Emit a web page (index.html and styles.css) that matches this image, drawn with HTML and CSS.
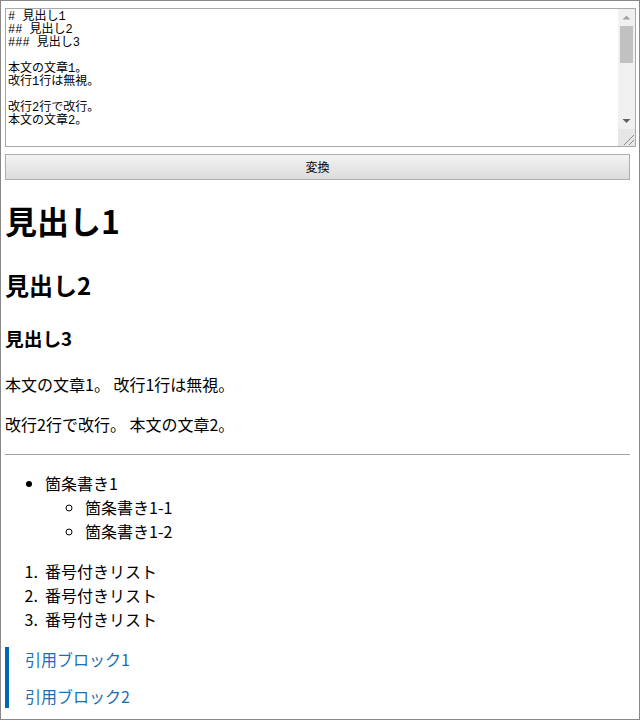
FILE: index.html
```html
<!DOCTYPE html>
<html lang="ja">
<head>
<meta charset="utf-8">
<title>Markdown</title>
<link rel="stylesheet" href="styles.css">
</head>
<body>
<div class="editor">
<textarea class="source"># 見出し1
## 見出し2
### 見出し3

本文の文章1。
改行1行は無視。

改行2行で改行。
本文の文章2。

---

- 箇条書き1
    - 箇条書き1-1
    - 箇条書き1-2

1. 番号付きリスト
2. 番号付きリスト
3. 番号付きリスト

> 引用ブロック1
>
> 引用ブロック2
</textarea>
<div class="vscroll">
<div class="sb-btn sb-up"><svg width="17" height="17" viewBox="0 0 17 17"><path d="M4.5 10.5 L8.5 6.5 L12.5 10.5 Z" fill="#a3a3a3"/></svg></div>
<div class="sb-thumb"></div>
<div class="sb-track"></div>
<div class="sb-btn sb-down"><svg width="17" height="17" viewBox="0 0 17 17"><path d="M4.5 7 L12.5 7 L8.5 11 Z" fill="#606060"/></svg></div>
<div class="sb-grip"><svg width="17" height="17" viewBox="0 0 17 17"><path d="M16 6 L6 16 M16 11 L11 16" stroke="#8a8a8a" stroke-width="1" fill="none"/></svg></div>
</div>
</div>
<button class="convert">変換</button>
<div class="output">
<h1>見出し1</h1>
<h2>見出し2</h2>
<h3>見出し3</h3>
<p>本文の文章1。 改行1行は無視。</p>
<p>改行2行で改行。 本文の文章2。</p>
<hr>
<ul>
<li>箇条書き1
<ul>
<li>箇条書き1-1</li>
<li>箇条書き1-2</li>
</ul>
</li>
</ul>
<ol>
<li>番号付きリスト</li>
<li>番号付きリスト</li>
<li>番号付きリスト</li>
</ol>
<blockquote>
<p>引用ブロック1</p>
<p>引用ブロック2</p>
</blockquote>
</div>
</body>
</html>
```
FILE: styles.css
```css
html {
  height: 100%;
}
body {
  margin: 0;
  height: 720px;
  box-sizing: border-box;
  border: 1px solid #888888;
  padding: 7px 9px 0 4px;
  overflow: hidden;
  background: #ffffff;
  color: #000000;
  font-family: "Noto Sans CJK JP", sans-serif;
  font-size: 16px;
  line-height: 24px;
}
.editor {
  display: flex;
  box-sizing: border-box;
  width: calc(100% + 6px);
  height: 139px;
  margin: 0 0 7px 0;
  border: 1px solid #a9a9a9;
  background: #ffffff;
}
.source {
  flex: 1;
  min-width: 0;
  box-sizing: border-box;
  height: 100%;
  margin: 0;
  padding: 2px;
  border: 0;
  font-family: "Liberation Mono", "Noto Sans CJK JP", monospace;
  font-size: 12px;
  line-height: 13px;
  color: #000000;
  background: #ffffff;
  overflow: hidden;
  resize: none;
  outline: none;
}
.vscroll {
  width: 17px;
  flex: none;
  display: flex;
  flex-direction: column;
  background: #f0f0f0;
}
.sb-btn {
  height: 17px;
  flex: none;
}
.sb-btn svg,
.sb-grip svg {
  display: block;
}
.sb-thumb {
  height: 37px;
  flex: none;
  margin: 0 2px;
  background: #c1c1c1;
}
.sb-track {
  flex: 1;
}
.sb-grip {
  height: 17px;
  flex: none;
  background: #e6e6e6;
}
.convert {
  display: block;
  box-sizing: border-box;
  width: 100%;
  height: 26px;
  margin: 0;
  padding: 0;
  border: 1px solid #adadad;
  border-radius: 0;
  background: linear-gradient(#f3f3f3, #dcdcdc);
  font-family: "Noto Sans CJK JP", sans-serif;
  font-size: 12px;
  line-height: 24px;
  color: #000000;
}
.output h1 {
  font-size: 32px;
  line-height: 48px;
  margin: 16px 0 23px 0;
  font-weight: bold;
}
.output h2 {
  font-size: 24px;
  line-height: 36px;
  margin: 0 0 21px 0;
  font-weight: bold;
}
.output h3 {
  font-size: 18.72px;
  line-height: 28px;
  margin: 0 0 20px 0;
  font-weight: bold;
}
.output p {
  margin: 0 0 16px 0;
}
.output hr {
  margin: 18px 0 16px 0;
  border: 0;
  border-top: 1px solid #a0a0a0;
  height: 0;
}
.output ul,
.output ol {
  margin: 0 0 16px 0;
  padding-left: 40px;
}
.output ul ul {
  margin: 0;
  list-style-type: circle;
}
.output ol li::marker {
  content: counter(list-item) ".  ";
}
.output blockquote {
  margin: 0;
  padding-left: 16px;
  border-left: 4px solid #0067b0;
  color: #1a6fb2;
}
.output blockquote p {
  margin: 0 0 13px 0;
}
```
